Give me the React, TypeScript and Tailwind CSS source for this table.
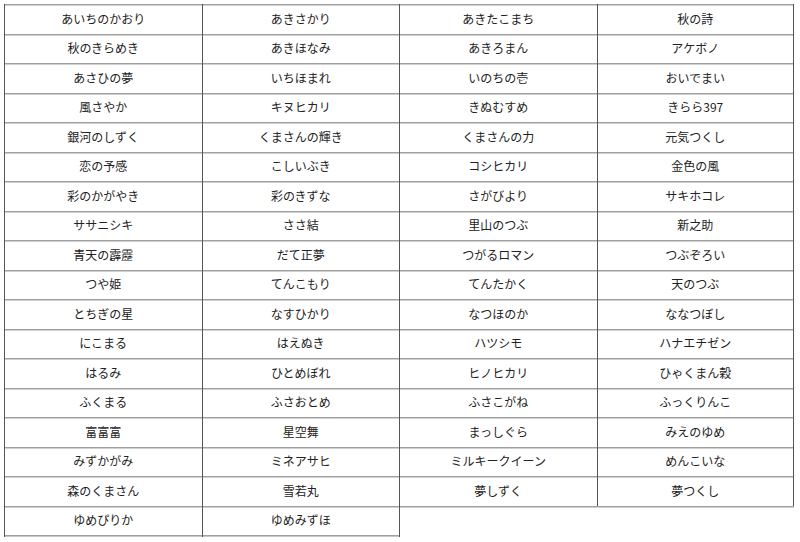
const varieties = [
  'あいちのかおり', 'あきさかり', 'あきたこまち', '秋の詩',
  '秋のきらめき', 'あきほなみ', 'あきろまん', 'アケボノ',
  'あさひの夢', 'いちほまれ', 'いのちの壱', 'おいでまい',
  '風さやか', 'キヌヒカリ', 'きぬむすめ', 'きらら397',
  '銀河のしずく', 'くまさんの輝き', 'くまさんの力', '元気つくし',
  '恋の予感', 'こしいぶき', 'コシヒカリ', '金色の風',
  '彩のかがやき', '彩のきずな', 'さがびより', 'サキホコレ',
  'ササニシキ', 'ささ結', '里山のつぶ', '新之助',
  '青天の霹靂', 'だて正夢', 'つがるロマン', 'つぶぞろい',
  'つや姫', 'てんこもり', 'てんたかく', '天のつぶ',
  'とちぎの星', 'なすひかり', 'なつほのか', 'ななつぼし',
  'にこまる', 'はえぬき', 'ハツシモ', 'ハナエチゼン',
  'はるみ', 'ひとめぼれ', 'ヒノヒカリ', 'ひゃくまん穀',
  'ふくまる', 'ふさおとめ', 'ふさこがね', 'ふっくりんこ',
  '富富富', '星空舞', 'まっしぐら', 'みえのゆめ',
  'みずかがみ', 'ミネアサヒ', 'ミルキークイーン', 'めんこいな',
  '森のくまさん', '雪若丸', '夢しずく', '夢つくし',
  'ゆめぴりか', 'ゆめみずほ',
];

export default function App() {
  const lastRowStart = varieties.length - (varieties.length % 4 || 4);

  return (
    <div
      className="w-[800px] h-[542px] bg-white pt-[4px] pl-[4px]"
      style={{ fontFamily: '"Noto Sans CJK JP", "Noto Sans", sans-serif' }}
    >
      <div className="grid grid-cols-4 w-[790px] text-[12px] text-[#222]">
        {varieties.map((name, i) => {
          const last = i >= lastRowStart;
          const endOfRow = i % 4 === 3;
          return (
            <div
              key={name}
              className={
                'flex items-center justify-center border-l border-[#555] ' +
                (endOfRow ? 'border-r ' : '') +
                (last
                  ? 'h-[31.5px] pb-[2px] shadow-[inset_0_1px_0_#a0a0a0,inset_0_2px_0_#d0d0d0,inset_0_-1px_0_#c8c8c8,inset_0_-2px_0_#a0a0a0]'
                  : 'h-[29.5px] shadow-[inset_0_1px_0_#a0a0a0,inset_0_2px_0_#d0d0d0]')
              }
            >
              {name}
            </div>
          );
        })}
        {/* closes the grid under the short last row */}
        <div className="h-[31.5px] border-l border-[#555] shadow-[inset_0_1px_0_#a0a0a0,inset_0_2px_0_#d0d0d0]" />
        <div className="h-[31.5px] shadow-[inset_0_1px_0_#a0a0a0,inset_0_2px_0_#d0d0d0]" />
      </div>
    </div>
  );
}
